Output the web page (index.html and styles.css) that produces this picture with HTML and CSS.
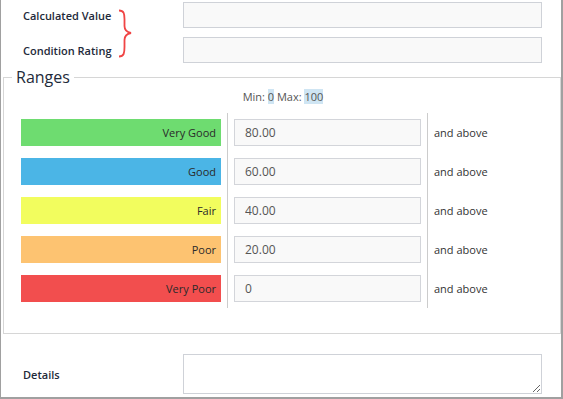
FILE: index.html
```html
<!DOCTYPE html>
<html lang="en">
<head>
  <meta charset="UTF-8">
  <meta name="viewport" content="width=device-width, initial-scale=1.0">
  <title>Condition Rating Ranges</title>
  <link rel="stylesheet" href="styles.css">
</head>
<body>
  <div class="page">
    <div class="top-fields">
      <svg class="brace" width="16" height="50" viewBox="0 0 16 50">
        <path d="M2,1.5 C7,1.5 7.5,5 7.5,10 L7.5,17 C7.5,21 9,23 14,24 C9,25 7.5,27 7.5,31 L7.5,38 C7.5,44 7,47.5 2,47.5" />
      </svg>
      <div class="field-row">
        <label class="field-label">Calculated Value</label>
        <input class="field-input" type="text">
      </div>
      <div class="field-row">
        <label class="field-label">Condition Rating</label>
        <input class="field-input" type="text">
      </div>
    </div>

    <fieldset class="ranges">
      <legend>Ranges</legend>
      <div class="minmax">Min: <span class="hl">0</span> Max: <span class="hl">100</span></div>
      <div class="range-grid">
        <div class="col col-bars">
          <div class="bar very-good">Very Good</div>
          <div class="bar good">Good</div>
          <div class="bar fair">Fair</div>
          <div class="bar poor">Poor</div>
          <div class="bar very-poor">Very Poor</div>
        </div>
        <div class="col col-inputs">
          <input class="range-input" type="text" value="80.00">
          <input class="range-input" type="text" value="60.00">
          <input class="range-input" type="text" value="40.00">
          <input class="range-input" type="text" value="20.00">
          <input class="range-input" type="text" value="0">
        </div>
        <div class="col col-suffix">
          <div class="suffix">and above</div>
          <div class="suffix">and above</div>
          <div class="suffix">and above</div>
          <div class="suffix">and above</div>
          <div class="suffix">and above</div>
        </div>
      </div>
    </fieldset>

    <div class="field-row details-row">
      <label class="field-label">Details</label>
      <textarea class="field-textarea"></textarea>
    </div>
  </div>
</body>
</html>
```

FILE: styles.css
```css
* {
  box-sizing: border-box;
}
body {
  margin: 0;
  font-family: "Open Sans", "Liberation Sans", sans-serif;
  color: #1e2a3a;
  background: #fff;
}
.page {
  width: 563px;
  height: 399px;
  border-left: 1px solid #a0a0a0;
  border-right: 2px solid #a0a0a0;
  border-bottom: 2px solid #a0a0a0;
  display: flex;
  flex-direction: column;
}
.top-fields {
  position: relative;
  display: flex;
  flex-direction: column;
  gap: 9px;
  padding-top: 2px;
}
.brace {
  position: absolute;
  left: 116px;
  top: 9px;
}
.brace path {
  fill: none;
  stroke: #f04545;
  stroke-width: 1.8;
}
.field-row {
  display: flex;
  align-items: center;
}
.field-label {
  width: 182px;
  padding-left: 22px;
  font-size: 11px;
  font-weight: 600;
  color: #1e2a3a;
}
.field-input {
  width: 359px;
  height: 26px;
  border: 1px solid #cfd2d8;
  background: #f9f9f9;
  font: inherit;
}
.ranges {
  margin: 3px 0 0 2px;
  padding: 1px 15px 25px 17px;
  border: 1px solid #d6d6d6;
  min-width: 0;
}
.ranges legend {
  margin-left: -9px;
  padding: 0 4px;
  font-size: 16px;
  line-height: 22px;
  color: #1e2a3a;
}
.minmax {
  text-align: center;
  font-size: 11px;
  line-height: 15px;
  color: #555;
}
.hl {
  background: #cfe5f3;
}
.range-grid {
  display: flex;
  margin-top: 9px;
}
.col {
  display: flex;
  flex-direction: column;
  gap: 12px;
  padding: 6px 0;
}
.col-bars {
  width: 207px;
  padding-right: 6px;
  border-right: 1px solid #cccccc;
}
.col-inputs {
  padding-left: 6px;
  padding-right: 6px;
  border-right: 1px solid #cccccc;
}
.col-suffix {
  padding-left: 6px;
}
.bar {
  height: 27px;
  display: flex;
  align-items: center;
  justify-content: flex-end;
  padding-right: 5px;
  font-size: 11px;
  color: #2a2a2a;
}
.very-good { background: #6edc70; }
.good { background: #4bb5e6; }
.fair { background: #f2fd5e; }
.poor { background: #fdc371; }
.very-poor { background: #f24e4e; }
.range-input {
  width: 187px;
  height: 27px;
  padding: 0 10px;
  border: 1px solid #d3d5da;
  background: #f9f9f9;
  font-family: inherit;
  font-size: 12px;
  color: #555;
}
.suffix {
  height: 27px;
  display: flex;
  align-items: center;
  font-size: 11px;
  color: #333;
}
.details-row {
  margin-top: 20px;
}
.field-textarea {
  width: 359px;
  height: 40px;
  border: 1px solid #cfd2d8;
  background: #fff;
  font: inherit;
}
```
